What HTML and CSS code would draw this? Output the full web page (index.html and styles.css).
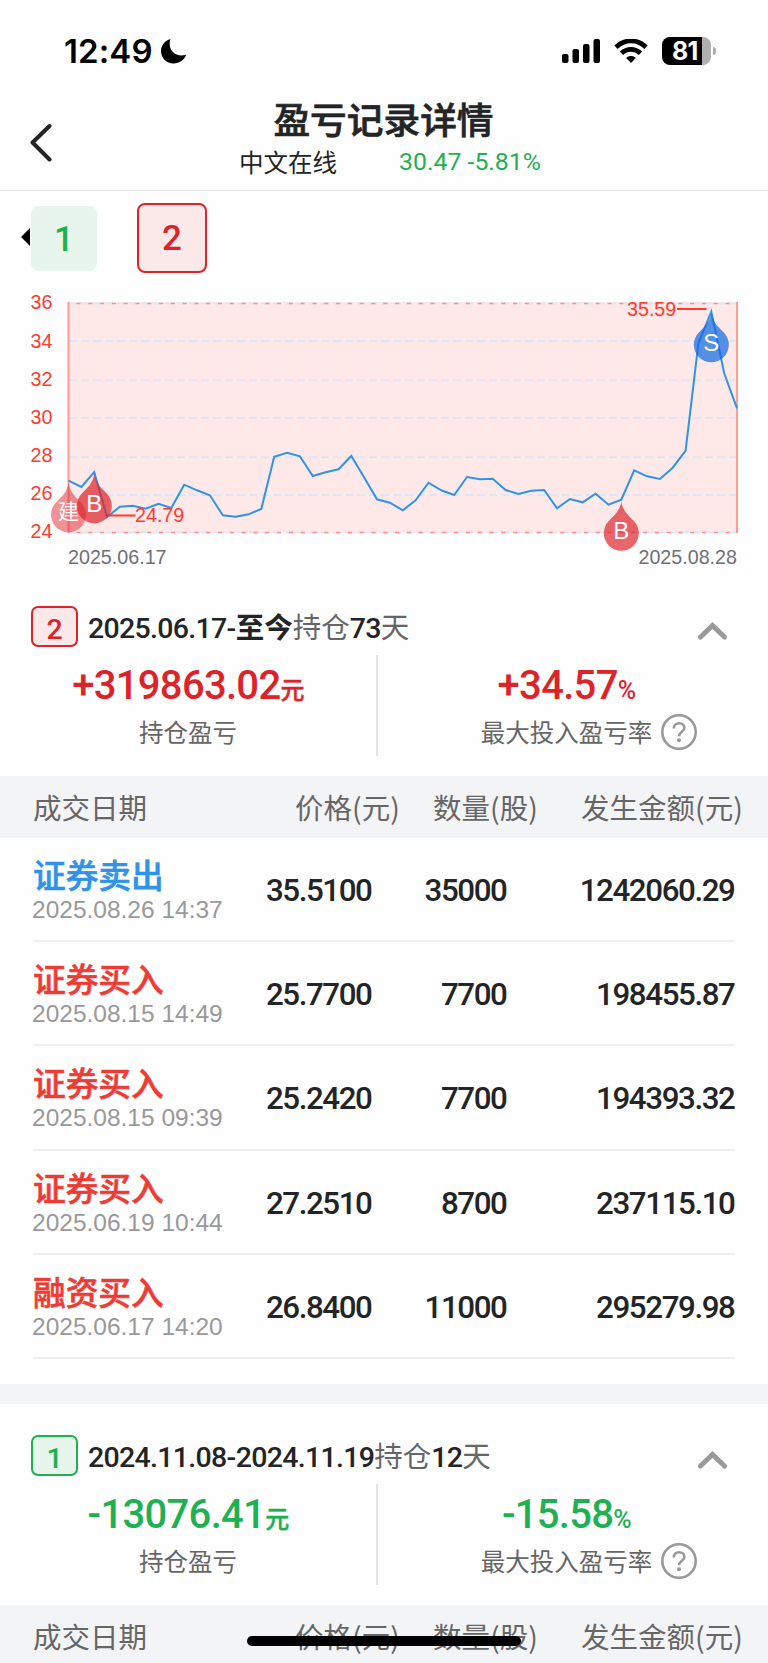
FILE: index.html
```html
<!DOCTYPE html>
<html lang="zh-CN">
<head>
    <meta charset="UTF-8">
    <meta name="viewport" content="width=device-width, initial-scale=1.0">
    <title>盈亏记录详情</title>
    <link rel="stylesheet" href="styles.css">
</head>
<body>
    <div class="status-bar">
        <span class="time">12:49</span>
        <svg class="moon" width="27" height="27" viewBox="0 0 27 27">
            <path d="M10.5 1C4.8 2.6 1 7.400 1 13C1 20 6.600 25.500 13.500 25.500C19.400 25.500 24.500 21.800 26.200 16.500C25 17.100 23.300 17.400 21.500 17.400C14.500 17.400 9.600 12.600 9.600 5.500C9.600 3.900 9.900 2.300 10.500 1Z"/>
        </svg>
        <div class="status-icons">
            <svg width="38" height="25" viewBox="0 0 38 25">
                <rect x="0" y="15" width="6.500" height="9" rx="2"/>
                <rect x="10.500" y="10" width="6.500" height="14" rx="2"/>
                <rect x="21" y="5" width="6.500" height="19" rx="2"/>
                <rect x="31.500" y="0" width="6.500" height="24" rx="2"/>
            </svg>
            <svg class="wifi" width="34" height="25" viewBox="0 0 34 25">
                <path d="M2 8.200C10.500 -0.200 23.500 -0.200 32 8.200" fill="none" stroke="#000" stroke-width="4.800"/>
                <path d="M7.500 14.200C13 9 21 9 26.500 14.200" fill="none" stroke="#000" stroke-width="4.800"/>
                <path d="M17 24L12.200 18.900C15 16.500 19 16.500 21.800 18.900Z"/>
            </svg>
            <div class="battery"><span>81</span></div>
            <div class="battery-cap"></div>
        </div>
    </div>

    <header class="nav">
        <svg class="back" width="24" height="40" viewBox="0 0 24 40">
            <path d="M20.500 4L3.500 20.500L20.500 37.500" fill="none" stroke="#232426" stroke-width="4" stroke-linecap="round" stroke-linejoin="round"/>
        </svg>
        <div class="nav-text">
            <h1>盈亏记录详情</h1>
            <div class="quote">
                <span class="stock">中文在线</span>
                <span class="price">30.47 -5.81%</span>
            </div>
        </div>
    </header>

    <div class="tabs">
        <span class="arrow-left"></span>
        <div class="tab tab-green">1</div>
        <div class="tab tab-red active">2</div>
    </div>

    <!-- Courbe du cours -->
    <svg class="chart" width="768" height="300" viewBox="0 280 768 300">
        <rect x="68" y="302" width="670" height="231" fill="#ffe8e8"/>
        <g stroke="#dce6f4" stroke-width="2" stroke-dasharray="8 4">
            <line x1="69" y1="303.500" x2="737" y2="303.500"/>
            <line x1="69" y1="341" x2="737" y2="341"/>
            <line x1="69" y1="380.300" x2="737" y2="380.300"/>
            <line x1="69" y1="418" x2="737" y2="418"/>
            <line x1="69" y1="457.300" x2="737" y2="457.300"/>
            <line x1="69" y1="495" x2="737" y2="495"/>
            <line x1="69" y1="532.500" x2="737" y2="532.500"/>
        </g>
        <g stroke="#ff8f88" stroke-width="1.500" stroke-dasharray="4 7.800">
            <line x1="76.500" y1="303.500" x2="737" y2="303.500"/>
            <line x1="76.500" y1="532.500" x2="737" y2="532.500"/>
        </g>
        <line x1="68.500" y1="302" x2="68.500" y2="533" stroke="#ff9a96" stroke-width="2"/>
        <line x1="737" y1="302" x2="737" y2="533" stroke="#ff9a96" stroke-width="2"/>
        <g class="y-labels" text-anchor="end">
            <text x="52.500" y="309.300">36</text>
            <text x="52.500" y="347.500">34</text>
            <text x="52.500" y="386">32</text>
            <text x="52.500" y="424">30</text>
            <text x="52.500" y="462">28</text>
            <text x="52.500" y="500">26</text>
            <text x="52.500" y="538.300">24</text>
        </g>
        <polyline class="line" points="68.5,480.7 81.4,487 94.2,472 107.1,517 119.9,506.7 132.8,505.7 145.6,508.7 158.5,503.7 171.3,508 184.2,484.7 197.1,490.3 209.9,495.3 222.8,515.3 235.6,516.7 248.5,514.3 261.3,509 274.2,456.7 287.1,452.7 299.9,456.3 312.8,476 325.6,472.3 338.5,469.3 351.3,456 364.2,477.5 377,499.3 389.9,502.7 402.8,510.3 415.6,500.3 428.5,482.7 441.3,490.3 454.2,495 467,477 479.9,479.3 492.7,478.7 505.6,490 518.5,494 531.3,490.7 544.2,490 557,508.3 569.9,499 582.7,502.3 595.6,493.7 608.5,504.7 621.3,499.7 634.2,470.3 647,476.3 659.9,479 672.7,467.7 685.6,450.7 698.4,343.3 711.3,311.7 724.2,373.3 737,408.3"/>
        <g class="mark">
            <line x1="108" y1="515.500" x2="135.500" y2="515.500"/>
            <text x="135" y="521.500">24.79</text>
            <line x1="677" y1="309" x2="706.500" y2="309"/>
            <text x="627" y="315.500">35.59</text>
        </g>
        <!-- Points d'achat / vente -->
        <g class="pin" text-anchor="middle">
            <path transform="translate(68.500 484)" fill="#dd262d" fill-opacity="0.5" d="M0 -1C1.500 9 8 13.500 12.500 18.500A17.500 17.500 0 1 1 -12.500 18.500C-8 13.500 -1.500 9 0 -1Z"/>
            <text class="pin-cjk" x="68.500" y="519">建</text>
            <path transform="translate(94.300 475)" fill="#dd262d" fill-opacity="0.72" d="M0 -1C1.500 9 8 13.500 12.500 18.500A17.500 17.500 0 1 1 -12.500 18.500C-8 13.500 -1.500 9 0 -1Z"/>
            <text x="94.300" y="511.500">B</text>
            <path transform="translate(621.300 502.500)" fill="#dd262d" fill-opacity="0.7" d="M0 -1C1.500 9 8 13.500 12.500 18.500A17.500 17.500 0 1 1 -12.500 18.500C-8 13.500 -1.500 9 0 -1Z"/>
            <text x="621.300" y="539">B</text>
            <path transform="translate(711.300 314)" fill="#1068e4" fill-opacity="0.7" d="M0 -1C1.500 9 8 13.500 12.500 18.500A17.500 17.500 0 1 1 -12.500 18.500C-8 13.500 -1.500 9 0 -1Z"/>
            <text x="711.300" y="350.500">S</text>
        </g>
        <g class="x-labels">
            <text x="68" y="564">2025.06.17</text>
            <text x="737" y="564" text-anchor="end">2025.08.28</text>
        </g>
    </svg>

    <section class="record red">
        <div class="record-head">
            <span class="badge">2</span>
            <div class="period"><b>2025.06.17-</b><strong>至今</strong>持仓<b>73</b>天</div>
            <svg class="fold" width="31" height="20" viewBox="0 0 31 20">
                <path d="M3.500 16L15.500 4.500L27.500 16" fill="none" stroke="#999" stroke-width="5" stroke-linecap="round"/>
            </svg>
        </div>
        <div class="summary">
            <div class="cell">
                <div class="amount">+319863.02<small>元</small></div>
                <div class="label">持仓盈亏</div>
            </div>
            <div class="cell">
                <div class="amount">+34.57<small class="pct">%</small></div>
                <div class="label">最大投入盈亏率
                    <svg class="help" width="36" height="36" viewBox="0 0 36 36">
                        <circle cx="18" cy="18" r="16.700" fill="none" stroke="#999" stroke-width="2.600"/>
                        <path d="M12.800 14.500C12.800 11.300 15 9.300 18.100 9.300C21.200 9.300 23.400 11.200 23.400 13.900C23.400 17.600 18 17.900 18 22.300" fill="none" stroke="#999" stroke-width="2.600"/>
                        <circle cx="18" cy="26.300" r="2" fill="#999"/>
                    </svg>
                </div>
            </div>
        </div>
        <div class="table-head">
            <span>成交日期</span><span>价格(元)</span><span>数量(股)</span><span>发生金额(元)</span>
        </div>
        <div class="rows">
            <div class="row">
                <div class="type"><div class="name sell">证券卖出</div><div class="date">2025.08.26 14:37</div></div>
                <span>35.5100</span><span>35000</span><span>1242060.29</span>
            </div>
            <div class="row">
                <div class="type"><div class="name">证券买入</div><div class="date">2025.08.15 14:49</div></div>
                <span>25.7700</span><span>7700</span><span>198455.87</span>
            </div>
            <div class="row">
                <div class="type"><div class="name">证券买入</div><div class="date">2025.08.15 09:39</div></div>
                <span>25.2420</span><span>7700</span><span>194393.32</span>
            </div>
            <div class="row">
                <div class="type"><div class="name">证券买入</div><div class="date">2025.06.19 10:44</div></div>
                <span>27.2510</span><span>8700</span><span>237115.10</span>
            </div>
            <div class="row">
                <div class="type"><div class="name">融资买入</div><div class="date">2025.06.17 14:20</div></div>
                <span>26.8400</span><span>11000</span><span>295279.98</span>
            </div>
        </div>
    </section>

    <div class="band"></div>

    <section class="record green">
        <div class="record-head">
            <span class="badge">1</span>
            <div class="period"><b>2024.11.08-2024.11.19</b>持仓<b>12</b>天</div>
            <svg class="fold" width="31" height="20" viewBox="0 0 31 20">
                <path d="M3.500 16L15.500 4.500L27.500 16" fill="none" stroke="#999" stroke-width="5" stroke-linecap="round"/>
            </svg>
        </div>
        <div class="summary">
            <div class="cell">
                <div class="amount">-13076.41<small>元</small></div>
                <div class="label">持仓盈亏</div>
            </div>
            <div class="cell">
                <div class="amount">-15.58<small class="pct">%</small></div>
                <div class="label">最大投入盈亏率
                    <svg class="help" width="36" height="36" viewBox="0 0 36 36">
                        <circle cx="18" cy="18" r="16.700" fill="none" stroke="#999" stroke-width="2.600"/>
                        <path d="M12.800 14.500C12.800 11.300 15 9.300 18.100 9.300C21.200 9.300 23.400 11.200 23.400 13.900C23.400 17.600 18 17.900 18 22.300" fill="none" stroke="#999" stroke-width="2.600"/>
                        <circle cx="18" cy="26.300" r="2" fill="#999"/>
                    </svg>
                </div>
            </div>
        </div>
        <div class="table-head">
            <span>成交日期</span><span>价格(元)</span><span>数量(股)</span><span>发生金额(元)</span>
        </div>
    </section>

    <div class="home-indicator"></div>
</body>
</html>
```

FILE: styles.css
```css
/* Global Styles */
* {
    box-sizing: border-box;
}

body {
    font-family: Roboto, "Noto Sans CJK SC", sans-serif;
    background-color: #fefefe;
    color: #232426;
    margin: 0;
    width: 768px;
    height: 1663px;
    overflow: hidden;
    position: relative;
}

/* Status bar */
.status-bar {
    display: flex;
    height: 96px;
    padding: 32px 57px 0 64px;
    color: #000;
}

.time {
    font-family: Inter, sans-serif;
    font-size: 33px;
    font-weight: 600;
    line-height: 39px;
    width: 96px;
    letter-spacing: 0.1px;
}

.moon {
    margin-top: 6px;
}

.status-icons {
    display: flex;
    margin-left: auto;
    padding-top: 7px;
}

.wifi {
    margin-left: 14px;
}

.battery {
    width: 49px;
    height: 28px;
    margin: -2px 0 0 14px;
    border-radius: 8px;
    background: linear-gradient(to right, #000 40px, #b0b0b0 40px);
    color: #fff;
    font-family: Inter, sans-serif;
    font-size: 25px;
    font-weight: 700;
    line-height: 28px;
    padding-left: 10px;
    letter-spacing: -0.8px;
}

.battery-cap {
    width: 3px;
    height: 8px;
    margin: 8px -5px 0 2px;
    border-radius: 0 4px 4px 0;
    background-color: #b0b0b0;
}

/* Header */
.nav {
    display: flex;
    height: 95px;
    border-bottom: 1px solid #e2e3e5;
}

.back {
    flex: none;
    margin: 26px 0 0 29px;
}

.nav-text {
    flex: 1;
    margin-right: 54px;
    text-align: center;
}

h1 {
    font-family: "Noto Sans CJK SC", sans-serif;
    font-size: 36.7px;
    font-weight: 500;
    line-height: 44px;
    margin: 0;
    -webkit-text-stroke: 0.7px;
}

.quote {
    display: flex;
    justify-content: center;
    padding: 5px 0 0 13px;
    line-height: 34px;
}

.stock {
    font-family: "Noto Sans CJK SC", sans-serif;
    font-size: 24.5px;
    width: 160px;
    text-align: left;
}

.price {
    font-size: 24.8px;
    color: #1eb053;
}

/* Tabs */
.tabs {
    display: flex;
    align-items: flex-start;
    height: 89px;
    padding: 6px 0 0 21px;
}

.arrow-left {
    border: 9.5px solid transparent;
    border-right-color: #000;
    border-left: 0;
    margin: 31px 1px 0 0;
}

.tab {
    width: 66px;
    height: 65px;
    margin-top: 9px;
    border-radius: 8px;
    font-size: 35px;
    font-weight: 500;
    line-height: 67px;
    text-align: center;
}

.tab-green {
    background-color: #e8f5ec;
    color: #1eb053;
    margin-right: 40px;
}

.tab-red {
    background-color: #fbe8e9;
    color: #dd232a;
}

.tab.active {
    width: 70px;
    height: 70px;
    margin-top: 6px;
    border: 2px solid #dd232a;
    line-height: 68px;
}

/* Chart */
.chart {
    display: block;
    font-family: "Liberation Sans", sans-serif;
    font-size: 19.7px;
}

.y-labels,
.mark text {
    fill: #ff3b30;
}

.mark line {
    stroke: #ff3b30;
    stroke-width: 2;
}

.x-labels {
    fill: #6e7079;
}

.line {
    fill: none;
    stroke: #2f93e8;
    stroke-width: 2;
}

.pin {
    fill: #fff;
    font-size: 24px;
}

.pin-cjk {
    font-family: "Noto Sans CJK SC", sans-serif;
    font-size: 21px;
}

/* Records */
.record-head {
    display: flex;
    height: 75px;
    padding: 26px 40px 0 31px;
}

.badge {
    width: 47px;
    height: 41px;
    border: 2px solid;
    border-radius: 7px;
    font-size: 28.5px;
    font-weight: 500;
    line-height: 43px;
    text-align: center;
}

.period {
    margin-left: 10px;
    font-size: 28.5px;
    line-height: 45px;
    color: #666;
}

.period b {
    color: #232426;
    font-weight: 500;
    letter-spacing: -0.68px;
}

.period strong {
    color: #232426;
}

.fold {
    margin: 15px 0 0 auto;
}

.red .badge,
.red .amount {
    color: #dd232a;
}

.red .badge {
    background-color: #fbe8e9;
}

.green .badge,
.green .amount {
    color: #1eb053;
}

.green .badge {
    background-color: #e8f5ec;
}

.summary {
    display: flex;
    height: 121px;
}

.cell {
    width: 377px;
    height: 101px;
    text-align: center;
}

.cell:first-child {
    width: 378px;
    border-right: 2px solid #e3e3e5;
}

.amount {
    height: 59px;
    font-size: 40px;
    font-weight: 500;
    line-height: 61px;
    letter-spacing: -0.7px;
}

.amount small {
    font-size: 24px;
    -webkit-text-stroke: 0.4px;
}

.amount .pct {
    font-size: 25px;
    -webkit-text-stroke: 0;
}

.label {
    position: relative;
    font-family: "Noto Sans CJK SC", sans-serif;
    font-size: 24.5px;
    line-height: 36px;
    color: #666;
}

.help {
    position: absolute;
    top: 0;
    left: 283px;
}

.table-head {
    display: grid;
    grid-template-columns: 262px 138px 148px 180px;
    height: 62px;
    padding-left: 33px;
    background-color: #f3f4f6;
    font-family: "Noto Sans CJK SC", sans-serif;
    font-size: 28.5px;
    line-height: 61px;
    color: #666;
}

.rows {
    padding: 0 33px 25px;
}

.row {
    display: grid;
    grid-template-columns: 197.5px 141px 135px 228px;
    height: 104.2px;
    border-bottom: 2px solid #f0f0f0;
    font-size: 31.3px;
    font-weight: 500;
    line-height: 105px;
    letter-spacing: -1.4px;
    text-align: right;
}

.type {
    text-align: left;
    letter-spacing: 0;
    white-space: nowrap;
}

.name {
    font-family: "Noto Sans CJK SC", sans-serif;
    font-size: 32.7px;
    font-weight: 500;
    line-height: 36px;
    margin-top: 18px;
    color: #ef3b35;
    -webkit-text-stroke: 0.6px;
}

.name.sell {
    color: #2f93e8;
}

.date {
    margin-left: -1px;
    font-family: "Liberation Sans", sans-serif;
    font-size: 24.5px;
    font-weight: 400;
    line-height: 36px;
    color: #999;
}

.band {
    height: 20px;
    background-color: #f3f4f6;
}

.green .record-head {
    height: 80px;
    padding-top: 31px;
}

/* Home indicator */
.home-indicator {
    position: absolute;
    left: 247px;
    top: 1636px;
    width: 274px;
    height: 10px;
    border-radius: 5px;
    background-color: #000;
}
```
